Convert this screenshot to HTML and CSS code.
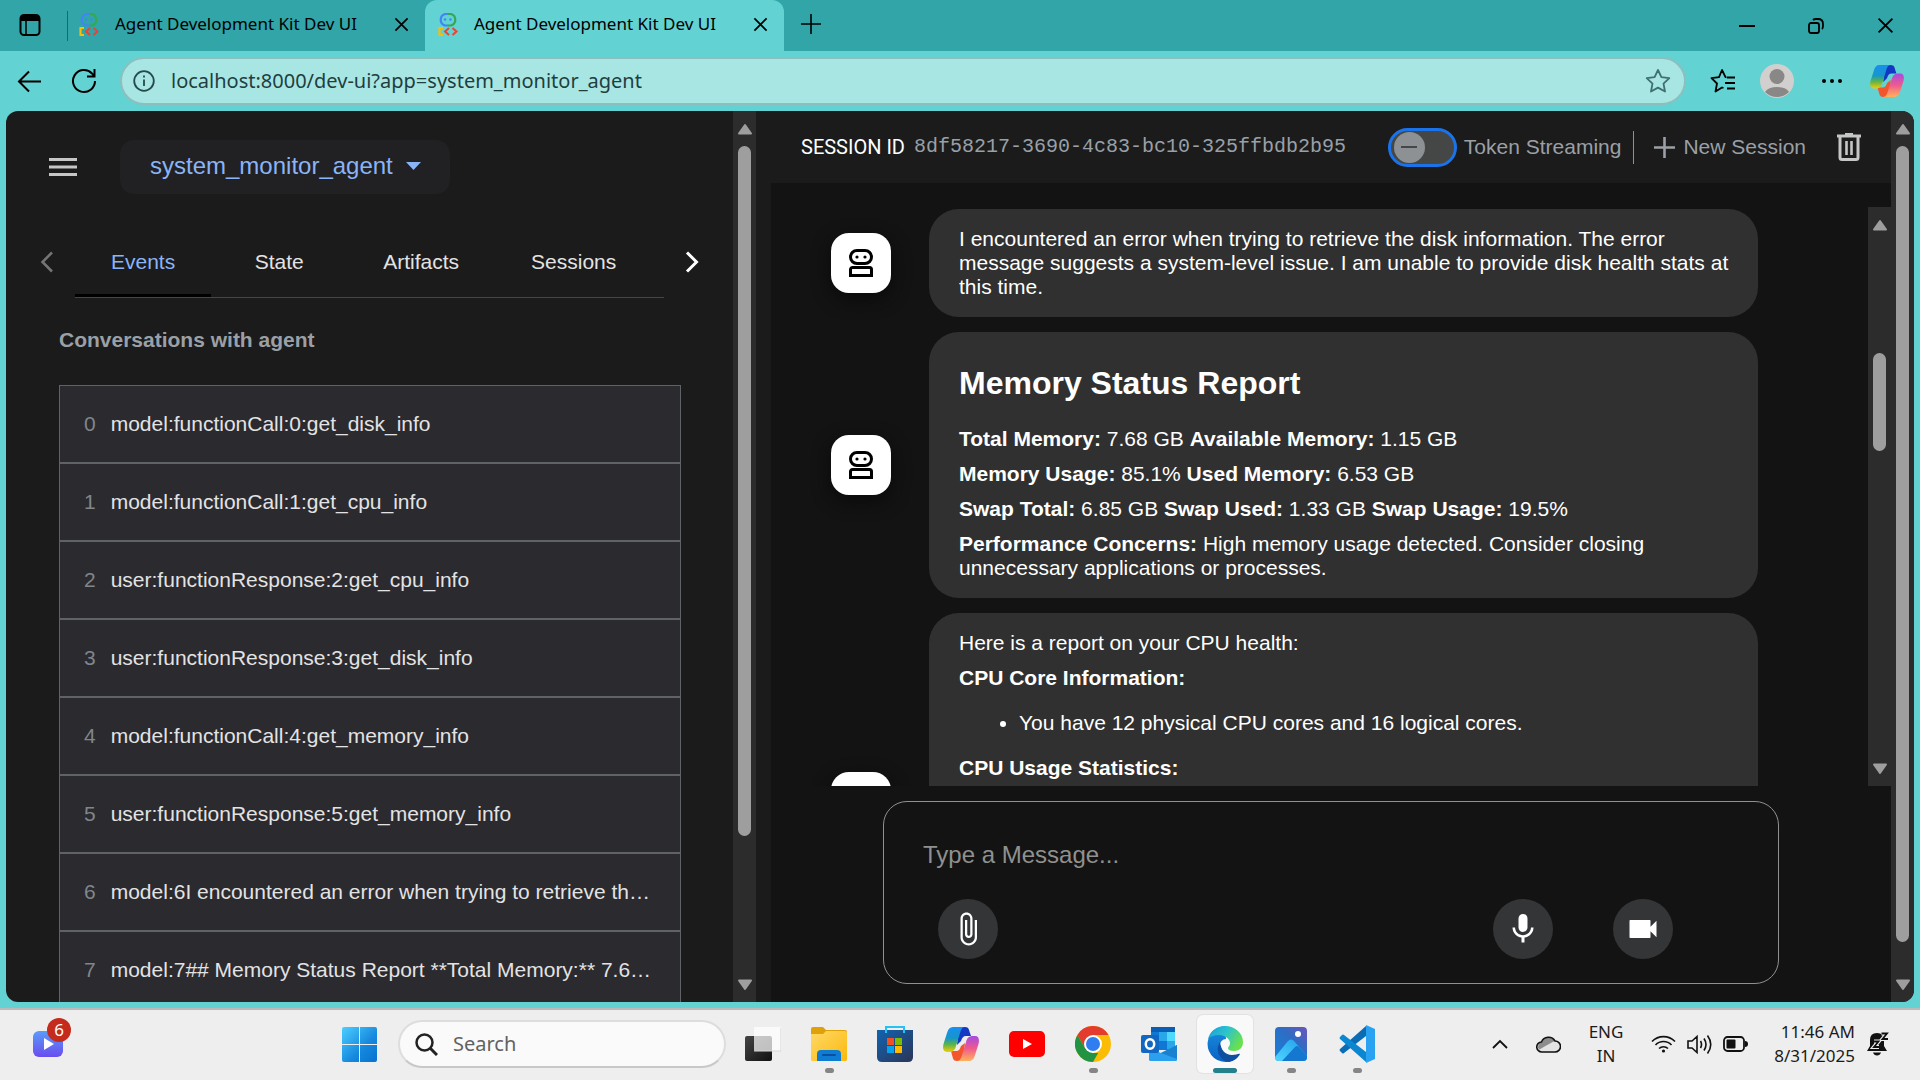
FILE: index.html
```html
<!DOCTYPE html>
<html lang="en">
<head>
<meta charset="utf-8">
<title>Agent Development Kit Dev UI</title>
<link rel="stylesheet" href="styles.css">
</head>
<body>
<svg class="defs" aria-hidden="true">
  <defs>
    <linearGradient id="cpA" x1="0" y1="0" x2="0" y2="1"><stop offset="0" stop-color="#1a8df0"/><stop offset=".45" stop-color="#1597c8"/><stop offset=".7" stop-color="#5db34a"/><stop offset="1" stop-color="#f5cc00"/></linearGradient>
    <linearGradient id="cpB" x1="0" y1="0" x2="0" y2="1"><stop offset="0" stop-color="#a64be0"/><stop offset=".5" stop-color="#ef5a8f"/><stop offset="1" stop-color="#ffb25a"/></linearGradient>
    <linearGradient id="win" gradientUnits="userSpaceOnUse" x1="0" y1="0" x2="35" y2="35"><stop offset="0" stop-color="#4ccfff"/><stop offset=".6" stop-color="#1688de"/><stop offset="1" stop-color="#0572cf"/></linearGradient>
    <linearGradient id="fold" x1="0" y1="0" x2="1" y2="1"><stop offset="0" stop-color="#ffd968"/><stop offset="1" stop-color="#fcb90c"/></linearGradient>
    <linearGradient id="store" x1="0" y1="0" x2="1" y2="1"><stop offset="0" stop-color="#1263b0"/><stop offset="1" stop-color="#2b3556"/></linearGradient>
    <linearGradient id="edgeTop" x1="0" y1="0" x2="1" y2=".5"><stop offset="0" stop-color="#1b9bd8"/><stop offset=".5" stop-color="#2bc2cf"/><stop offset="1" stop-color="#69e04e"/></linearGradient>
    <linearGradient id="edgeSide" x1="0" y1="0" x2="0" y2="1"><stop offset="0" stop-color="#1c8fe0"/><stop offset="1" stop-color="#0a62c4"/></linearGradient>
    <linearGradient id="photo" x1="0" y1="1" x2="1" y2="0"><stop offset="0" stop-color="#1580d8"/><stop offset=".6" stop-color="#2f6cc4"/><stop offset="1" stop-color="#6b55b8"/></linearGradient>
    <linearGradient id="hill" x1="0" y1="1" x2="1" y2="0"><stop offset="0" stop-color="#4fd4ff"/><stop offset="1" stop-color="#1f9fea"/></linearGradient>
    <linearGradient id="clip" x1="0" y1="0" x2="0" y2="1"><stop offset="0" stop-color="#5a9cf8"/><stop offset="1" stop-color="#6a4cf0"/></linearGradient>
    <linearGradient id="dark" x1="0" y1="0" x2="1" y2="1"><stop offset="0" stop-color="#444"/><stop offset="1" stop-color="#111"/></linearGradient>
    <symbol id="adk" viewBox="0 0 22 24">
      <path d="M11 2H8a6 6 0 0 0 0 11.500h3" fill="none" stroke="#4285f4" stroke-width="2.200"/>
      <path d="M11 2h3a6 6 0 0 1 0 11.500h-3" fill="none" stroke="#34a853" stroke-width="2.200"/>
      <circle cx="8" cy="7.500" r="1.200" fill="#4285f4"/><circle cx="13.500" cy="7.500" r="1.200" fill="#4285f4"/>
      <path d="M6 16H2.500v7H6" fill="none" stroke="#fbbc04" stroke-width="2.200"/>
      <path d="M12 16l-4 3.500 4 3.500M15.500 16l4 3.500-4 3.500" fill="none" stroke="#ea4335" stroke-width="2"/>
    </symbol>
    <symbol id="x" viewBox="0 0 16 16"><path d="M1.500 1.500l13 13M14.500 1.500l-13 13" stroke="currentColor" stroke-width="1.800" fill="none"/></symbol>
    <symbol id="copilot" viewBox="0 0 36 34">
      <path d="M16 0h6c4 0 4 3 5 6l1 3h-5c-3 0-4 2-5 5l-4 4z" fill="#1338c4"/>
      <path d="M20 34h-6c-4 0-4-3-5-6l-1-4h5c3 0 4-2 5-5l4-3z" fill="#f4562c"/>
      <path d="M10 0h12c-3 0-4 3-5 6l-4 13c-1 4-3 6-7 6H4c-4 0-4.500-4-3.500-8L4 6c1-4 3-6 6-6z" fill="url(#cpA)"/>
      <path d="M26 34H14c3 0 4-3 5-6l4-13c1-4 3-6 7-6h2c4 0 4.500 4 3.500 8L32 28c-1 4-3 6-6 6z" fill="url(#cpB)"/>
    </symbol>
    <symbol id="bot" viewBox="0 0 24 28">
      <rect x="1.500" y="1.500" width="21" height="13" rx="6.500" fill="none" stroke="#000" stroke-width="3"/>
      <circle cx="8" cy="8" r="1.600"/><circle cx="16" cy="8" r="1.600"/>
      <path d="M1.500 26.500v-6a2 2 0 0 1 2-2h17a2 2 0 0 1 2 2v6z" fill="none" stroke="#000" stroke-width="3"/>
    </symbol>
    <symbol id="up" viewBox="0 0 16 12"><path d="M8 2l6 8.500H2z" fill="#9e9e9e" stroke="#9e9e9e" stroke-width="2" stroke-linejoin="round"/></symbol>
    <symbol id="down" viewBox="0 0 16 12"><path d="M8 10L2 1.500h12z" fill="#9e9e9e" stroke="#9e9e9e" stroke-width="2" stroke-linejoin="round"/></symbol>
  </defs>
</svg>

<header class="tabstrip">
  <button class="icon-btn workspaces" aria-label="Tab actions"><svg width="22" height="24" viewBox="0 0 22 24"><rect x="1.500" y="2" width="19" height="20" rx="3.500" fill="none" stroke="#000" stroke-width="2"/><path d="M2 4q0-2 3-2h12q3 0 3 2v4H2z"/><path d="M7 8v14" stroke="#000" stroke-width="1.500"/></svg></button>
  <div class="browser-tab">
    <svg width="22" height="24"><use href="#adk"/></svg>
    <span class="tab-title">Agent Development Kit Dev UI</span>
    <button class="icon-btn" aria-label="Close tab"><svg width="15" height="15"><use href="#x"/></svg></button>
  </div>
  <div class="browser-tab active">
    <svg width="22" height="24"><use href="#adk"/></svg>
    <span class="tab-title">Agent Development Kit Dev UI</span>
    <button class="icon-btn" aria-label="Close tab"><svg width="15" height="15"><use href="#x"/></svg></button>
  </div>
  <button class="icon-btn new-tab" aria-label="New tab"><svg width="22" height="22" viewBox="0 0 22 22"><path d="M11 1v20M1 11h20" stroke="#000" stroke-width="1.600"/></svg></button>
  <div class="window-controls">
    <button class="icon-btn" aria-label="Minimize"><svg width="16" height="16" viewBox="0 0 16 16"><path d="M0 8h16" stroke="#000" stroke-width="2"/></svg></button>
    <button class="icon-btn" aria-label="Restore"><svg width="16" height="16" viewBox="0 0 16 16" fill="none" stroke="#000" stroke-width="1.800"><rect x="1" y="5" width="10" height="10" rx="2"/><path d="M5 2q1-1 3-1h2q5 0 5 5v2q0 2-1 3"/></svg></button>
    <button class="icon-btn" aria-label="Close window"><svg width="17" height="17"><use href="#x"/></svg></button>
  </div>
</header>

<nav class="toolbar">
  <button class="icon-btn" aria-label="Back"><svg width="25" height="23" viewBox="0 0 25 23" fill="none" stroke="#000" stroke-width="2"><path d="M24 11.500H2M12 1.500l-10 10 10 10"/></svg></button>
  <button class="icon-btn reload" aria-label="Reload"><svg width="26" height="26" viewBox="0 0 26 26" fill="none" stroke="#000" stroke-width="2"><path d="M24 13a11 11 0 1 1-3-7.500L23 8M23.500 1v7.500H16"/></svg></button>
  <div class="address">
    <svg width="22" height="22" viewBox="0 0 22 22" fill="none" stroke="#244a4b" stroke-width="1.800"><circle cx="11" cy="11" r="9.800"/><path d="M11 9.500V16M11 5.500v2"/></svg>
    <input type="text" aria-label="Address" value="localhost:8000/dev-ui?app=system_monitor_agent">
    <button class="icon-btn" aria-label="Add to favorites"><svg width="26" height="26" viewBox="0 0 26 26" fill="none" stroke="#3f6f70" stroke-width="1.800" stroke-linejoin="round"><path d="M13 2l3.400 7.200 7.900 1-5.800 5.400 1.500 7.900-7-3.900-7 3.900 1.500-7.900-5.800-5.400 7.900-1z"/></svg></button>
  </div>
  <div class="toolbar-end">
    <button class="icon-btn" aria-label="Favorites"><svg width="26" height="26" viewBox="0 0 26 26" fill="none" stroke="#000" stroke-width="1.800" stroke-linejoin="round"><path d="M16.500 9.500l-1-.3L12 2 9 9.200l-7.500 1 5.500 5.300L5.500 23.500l6.500-4 1.500.5M17 9.500h8M15 15h10M17 20.500h8"/></svg></button>
    <button class="icon-btn" aria-label="Profile"><svg width="34" height="34" viewBox="0 0 34 34"><circle cx="17" cy="17" r="17" fill="#d2d0ce"/><circle cx="17" cy="12.500" r="7.500" fill="#8a8886"/><path d="M5 28a13 8 0 0 1 24 0 17 17 0 0 1-24 0z" fill="#8a8886"/></svg></button>
    <button class="icon-btn" aria-label="Settings and more"><svg width="20" height="4" viewBox="0 0 20 4"><circle cx="2" cy="2" r="2"/><circle cx="10" cy="2" r="2"/><circle cx="18" cy="2" r="2"/></svg></button>
    <button class="icon-btn" aria-label="Copilot"><svg width="34" height="32"><use href="#copilot"/></svg></button>
  </div>
</nav>

<div class="viewport">
  <aside class="sidebar">
    <div class="side-content">
      <div class="side-head">
        <button class="icon-btn" aria-label="Menu"><svg width="28" height="20" viewBox="0 0 28 20"><path d="M0 2.500h28M0 10h28M0 17.500h28" stroke="#c4c7c5" stroke-width="3"/></svg></button>
        <div class="app-picker">
          <select aria-label="Agent"><option>system_monitor_agent</option></select>
          <svg width="15" height="8" viewBox="0 0 15 8"><path d="M0 0h15L7.500 8z" fill="#8ab4f8"/></svg>
        </div>
      </div>
      <div class="side-tabs">
        <button class="icon-btn" aria-label="Previous tabs"><svg width="14" height="22" viewBox="0 0 14 22"><path d="M12 1.500L2.500 11l9.500 9.500" fill="none" stroke="#757575" stroke-width="2.500"/></svg></button>
        <div class="tab-row" role="tablist">
          <button class="side-tab selected" role="tab">Events</button>
          <button class="side-tab" role="tab">State</button>
          <button class="side-tab" role="tab">Artifacts</button>
          <button class="side-tab" role="tab">Sessions</button>
        </div>
        <button class="icon-btn" aria-label="Next tabs"><svg width="14" height="22" viewBox="0 0 14 22"><path d="M2 1.500l9.500 9.500L2 20.500" fill="none" stroke="#fff" stroke-width="3"/></svg></button>
      </div>
      <h2 class="side-title">Conversations with agent</h2>
      <ol class="events">
        <li><button><span class="num">0</span><span class="name">model:functionCall:0:get_disk_info</span></button></li>
        <li><button><span class="num">1</span><span class="name">model:functionCall:1:get_cpu_info</span></button></li>
        <li><button><span class="num">2</span><span class="name">user:functionResponse:2:get_cpu_info</span></button></li>
        <li><button><span class="num">3</span><span class="name">user:functionResponse:3:get_disk_info</span></button></li>
        <li><button><span class="num">4</span><span class="name">model:functionCall:4:get_memory_info</span></button></li>
        <li><button><span class="num">5</span><span class="name">user:functionResponse:5:get_memory_info</span></button></li>
        <li><button><span class="num">6</span><span class="name">model:6I encountered an error when trying to retrieve th…</span></button></li>
        <li><button><span class="num">7</span><span class="name">model:7## Memory Status Report **Total Memory:** 7.6…</span></button></li>
      </ol>
    </div>
    <div class="scrollbar side-bar"><svg width="16" height="12"><use href="#up"/></svg><div class="track"><div class="thumb"></div></div><svg width="16" height="12"><use href="#down"/></svg></div>
  </aside>

  <main class="main">
    <header class="session">
      <span class="session-label">SESSION ID</span>
      <span class="session-id">8df58217-3690-4c83-bc10-325ffbdb2b95</span>
      <div class="session-actions">
        <input type="checkbox" id="streaming" class="toggle"><label for="streaming">Token Streaming</label>
        <button class="new-session"><svg width="21" height="21" viewBox="0 0 21 21"><path d="M10.500 0v21M0 10.500h21" stroke="currentColor" stroke-width="2.600"/></svg>New Session</button>
        <button class="icon-btn" aria-label="Delete session"><svg width="24" height="28" viewBox="0 0 24 28" fill="none" stroke="#c4c7c5"><path d="M0 3h24" stroke-width="3"/><path d="M8 1h8" stroke-width="2"/><path d="M3 4v20.500a2 2 0 0 0 2 2h14a2 2 0 0 0 2-2V4" stroke-width="3"/><path d="M9.500 8v14M14.500 8v14" stroke-width="2.600"/></svg></button>
      </div>
    </header>
    <section class="chat">
      <div class="scroller">
        <div class="messages">
          <article class="message"><div class="avatar"><svg width="24" height="28"><use href="#bot"/></svg></div>
            <div class="bubble"><p>I encountered an error when trying to retrieve the disk information. The error message suggests a system-level issue. I am unable to provide disk health stats at this time.</p></div>
          </article>
          <article class="message"><div class="avatar"><svg width="24" height="28"><use href="#bot"/></svg></div>
            <div class="bubble">
              <h2>Memory Status Report</h2>
              <p><strong>Total Memory:</strong> 7.68 GB <strong>Available Memory:</strong> 1.15 GB</p>
              <p><strong>Memory Usage:</strong> 85.1% <strong>Used Memory:</strong> 6.53 GB</p>
              <p><strong>Swap Total:</strong> 6.85 GB <strong>Swap Used:</strong> 1.33 GB <strong>Swap Usage:</strong> 19.5%</p>
              <p><strong>Performance Concerns:</strong> High memory usage detected. Consider closing unnecessary applications or processes.</p>
            </div>
          </article>
          <article class="message"><div class="avatar"><svg width="24" height="28"><use href="#bot"/></svg></div>
            <div class="bubble long">
              <p>Here is a report on your CPU health:</p>
              <p><strong>CPU Core Information:</strong></p>
              <ul><li>You have 12 physical CPU cores and 16 logical cores.</li></ul>
              <p><strong>CPU Usage Statistics:</strong></p>
            </div>
          </article>
        </div>
        <div class="scrollbar chat-bar"><svg width="16" height="12"><use href="#up"/></svg><div class="track"><div class="thumb"></div></div><svg width="16" height="12"><use href="#down"/></svg></div>
      </div>
      <form class="composer">
        <input type="text" aria-label="Message" placeholder="Type a Message...">
        <div class="composer-actions">
          <button type="button" class="round" aria-label="Attach file"><svg width="36" height="36" viewBox="0 0 24 24" fill="#fff"><path d="M16.500 6v11.500c0 2.210-1.790 4-4 4s-4-1.790-4-4V5c0-1.380 1.120-2.500 2.500-2.500s2.500 1.120 2.500 2.500v10.500c0 .55-.45 1-1 1s-1-.45-1-1V6H10v9.500c0 1.380 1.120 2.500 2.500 2.500s2.500-1.120 2.500-2.500V5c0-2.210-1.790-4-4-4S7 2.790 7 5v12.500c0 3.040 2.460 5.500 5.500 5.500s5.500-2.460 5.500-5.500V6h-1.500z"/></svg></button>
          <button type="button" class="round mic" aria-label="Use microphone"><svg width="36" height="36" viewBox="0 0 24 24" fill="#fff"><path d="M12 14c1.660 0 2.990-1.340 2.990-3L15 5c0-1.660-1.340-3-3-3S9 3.340 9 5v6c0 1.660 1.340 3 3 3zm5.300-3c0 3-2.540 5.100-5.300 5.100S6.700 14 6.700 11H5c0 3.410 2.720 6.230 6 6.720V21h2v-3.280c3.280-.48 6-3.300 6-6.720h-1.700z"/></svg></button>
          <button type="button" class="round" aria-label="Use camera"><svg width="36" height="36" viewBox="0 0 24 24" fill="#fff"><path d="M17 10.500V6.500Q17 6 16.500 6h-13Q3 6 3 6.500v11q0 .5.5.5h13q.5 0 .5-.5v-4l4 4v-11l-4 4z"/></svg></button>
        </div>
      </form>
    </section>
  </main>
  <div class="scrollbar page-bar"><svg width="16" height="12"><use href="#up"/></svg><div class="track"><div class="thumb"></div></div><svg width="16" height="12"><use href="#down"/></svg></div>
</div>

<footer class="taskbar">
  <div class="widgets"><button class="icon-btn widget" aria-label="Widgets"><svg width="30" height="26" viewBox="0 0 30 26"><rect width="30" height="26" rx="6" fill="url(#clip)"/><path d="M11 7l10 6-10 6z" fill="#fff"/></svg><span class="badge">6</span></button></div>
  <button class="icon-btn" aria-label="Start"><svg width="35" height="35" viewBox="0 0 35 35"><path d="M2 0h15v17H0V2q0-2 2-2zM18 0h15q2 0 2 2v15H18zM0 18h17v17H2q-2 0-2-2zM18 18h17v15q0 2-2 2H18z" fill="url(#win)"/></svg></button>
  <label class="search"><svg width="23" height="23" viewBox="0 0 23 23" fill="none" stroke="#222" stroke-width="2.500"><circle cx="9.500" cy="9.500" r="8"/><path d="M15 15l7 7" stroke-width="3"/></svg><input type="text" aria-label="Search" placeholder="Search"></label>
  <div class="apps">
    <button class="app" aria-label="Task view"><svg width="36" height="36" viewBox="0 0 36 36"><rect y="10" width="27" height="25" rx="2" fill="url(#dark)"/><rect x="9" y="1" width="27" height="24" rx="1" fill="#fff" opacity=".72"/><path d="M9 25h27V2" fill="none" stroke="#d5d5d5"/></svg></button>
    <button class="app running" aria-label="File Explorer"><svg width="36" height="36" viewBox="0 0 36 36"><path d="M0 3q0-2 2-2h10l3 3h19q2 0 2 2v4H0z" fill="#dfa008"/><path d="M0 8h12l3-3h19q2 0 2 2v27q0 1-2 1H2q-2 0-2-1z" fill="url(#fold)"/><path d="M6 35V28q0-4 4-4h16q4 0 4 4v7z" fill="#0f7cd4"/><rect x="11" y="28" width="14" height="2" rx="1" fill="#0a4fa0"/></svg></button>
    <button class="app" aria-label="Microsoft Store"><svg width="36" height="36" viewBox="0 0 36 36"><path d="M0 4h36v27q0 5-5 5H5q-5 0-5-5z" fill="url(#store)"/><path d="M9 7V1h18v6" fill="none" stroke="#28c1f4" stroke-width="2"/><path d="M10 12h7v7h-7z" fill="#f25022"/><path d="M18 12h7v7h-7z" fill="#7fba00"/><path d="M10 20h7v7h-7z" fill="#00a4ef"/><path d="M18 20h7v7h-7z" fill="#ffb900"/></svg></button>
    <button class="app" aria-label="Copilot"><svg width="36" height="34"><use href="#copilot"/></svg></button>
    <button class="app" aria-label="YouTube"><svg width="36" height="26" viewBox="0 0 36 26"><rect width="36" height="26" rx="5" fill="#f00"/><path d="M14 8l9 5-9 5z" fill="#fff"/></svg></button>
    <button class="app running" aria-label="Chrome"><svg width="36" height="36" viewBox="0 0 36 36"><circle cx="18" cy="18" r="18" fill="#fbbc05"/><path d="M2.400 9A18 18 0 0 1 33.600 9H18v9l-7.800 4.500z" fill="#e33b2e"/><path d="M2.400 9l7.800 13.500L18 27h5.200L18 36A18 18 0 0 1 2.400 9z" fill="#229342"/><circle cx="18" cy="18" r="9" fill="#fff"/><circle cx="18" cy="18" r="7" fill="#2f7df0"/></svg></button>
    <button class="app" aria-label="Outlook"><svg width="36" height="36" viewBox="0 0 36 36"><path d="M10 2q0-1 1-1h22q1 0 1 1v22H10z" fill="#0f78d4"/><path d="M10 1h24v5H10z" fill="#0a5fb4"/><path d="M18 6h8v9h-8zM26 15h8v8h-8z" fill="#28a8ea"/><path d="M26 6h8v9h-8z" fill="#50d9ff"/><path d="M36 19v15q0 1-1 1H10q-2 0-2-1V22l12 5z" fill="#2aa0ee"/><path d="M20 27l16-8v14z" fill="#1a80d0"/><rect y="9" width="18" height="18" rx="2" fill="#1068c2"/><ellipse cx="9" cy="18" rx="4.200" ry="4.800" fill="none" stroke="#fff" stroke-width="2.500"/></svg></button>
    <button class="app running current" aria-label="Edge"><svg width="36" height="36" viewBox="0 0 36 36"><path d="M18 0a18 18 0 1 0 13 31c-8 3-17-1-18-9-1-5 2-9 6-9z" fill="url(#edgeSide)"/><path d="M1 13C3 5 10 0 18 0c10 0 18 7 18 16 0 6-4 9-9 9-4 0-6-1-6-3 0-1 2-2 2-5 0-4-5-8-11-8-5 0-9 2-11 4z" fill="url(#edgeTop)"/><path d="M13 16c-6 9 1 19 9 20 5-1 9-4 11-8-1-1-4 1-8 1-7 0-11-5-12-13z" fill="#0f4fa0"/></svg></button>
    <button class="app running" aria-label="Photos"><svg width="32" height="34" viewBox="0 0 32 34"><rect width="32" height="34" rx="4" fill="url(#photo)"/><path d="M0 30l13-16q3-3 6 0l13 15v1q0 4-4 4H4q-4 0-4-4z" fill="url(#hill)"/><path d="M7 34l13-14q2-2 4 0l8 9v1q0 4-4 4z" fill="#1478d0"/><circle cx="23" cy="7" r="3" fill="#fff"/></svg></button>
    <button class="app running" aria-label="Visual Studio Code"><svg width="36" height="38" viewBox="0 0 36 38"><path d="M27 1v10L5 28q-1 1-2 0l-2-2q-1-1 0-2z" fill="#0a6cb4"/><path d="M27 37V27L5 10q-1-1-2 0l-2 2q-1 1 0 2z" fill="#0b86d0"/><path d="M27 0l9 4v30l-9 4z" fill="#2aa2f2"/></svg></button>
  </div>
  <div class="tray">
    <button class="icon-btn" aria-label="Show hidden icons"><svg width="16" height="10" viewBox="0 0 16 10"><path d="M1 9l7-7 7 7" fill="none" stroke="#111" stroke-width="1.800"/></svg></button>
    <svg width="25" height="18" viewBox="0 0 25 18"><path d="M6 17a5 5 0 0 1-.5-10A7.500 7.500 0 0 1 19 6a5.500 5.500 0 0 1 0 11z" fill="#e4e4e4"/><path d="M2 13Q2 8 6 7.500a7 7 0 0 1 12.500-1.500l-10 5.500-5 3z" fill="#8d8d8d"/><path d="M6 17a5 5 0 0 1-.5-10A7.500 7.500 0 0 1 19 6a5.500 5.500 0 0 1 0 11z" fill="none" stroke="#111" stroke-width="1.600"/></svg>
    <span class="lang">ENG<br>IN</span>
    <div class="status">
      <svg width="25" height="18" viewBox="0 0 25 18" fill="none" stroke="#111" stroke-width="1.600"><path d="M1 6.500a16 16 0 0 1 23 0M4.500 10a11 11 0 0 1 16 0M8 13.500a6.500 6.500 0 0 1 9 0"/><circle cx="12.500" cy="16" r="1.600" fill="#111" stroke="none"/></svg>
      <svg width="25" height="21" viewBox="0 0 25 21" fill="none" stroke="#111" stroke-width="1.600"><path d="M1 7h4l5-4.500v16L5 14H1zM13.500 7q2 3.500 0 7M17 4.500q4 6 0 12M20.500 1.500q6.500 9 0 18"/></svg>
      <svg width="25" height="16" viewBox="0 0 25 16"><rect x="1" y="1" width="20" height="14" rx="3.500" fill="none" stroke="#111" stroke-width="1.800"/><rect x="3.500" y="3.500" width="9" height="9" rx="1" fill="#111"/><path d="M22 5q3 0 3 3t-3 3z" fill="#111"/></svg>
    </div>
    <time class="clock">11:46 AM<br>8/31/2025</time>
    <svg width="22" height="24" viewBox="0 0 22 24"><path d="M10 1Q3 1 3 8v6l-3 5h20l-3-5V8q0-7-7-7zM6 20.500h8q-1 3-4 3t-4-3z" fill="#111"/><path d="M14.500 1.500H20L15.500 7H21M7 9.500h4.500L7 15h5" fill="none" stroke="#eee" stroke-width="4"/><path d="M14.500 1.500H20L15.500 7H21" fill="none" stroke="#111" stroke-width="1.800"/><path d="M7 9.500h4.500L7 15h5" fill="none" stroke="#111" stroke-width="1.800"/></svg>
  </div>
</footer>
</body>
</html>
```
FILE: styles.css
```css
* { box-sizing: border-box; }
body {
  margin: 0;
  height: 100vh;
  display: flex;
  flex-direction: column;
  overflow: hidden;
  background: #62d2d2;
  color: #fff;
  font-family: "Liberation Sans", Arial, sans-serif;
  font-size: 21px;
  line-height: 24px;
}
h2, p, ul, ol { margin: 0; padding: 0; }
button, input, select { font: inherit; color: inherit; background: none; border: 0; padding: 0; margin: 0; }
svg { display: block; flex: none; }
.defs { position: absolute; width: 0; height: 0; }
.icon-btn { display: flex; align-items: center; justify-content: center; flex: none; }

/* Browser chrome */
.tabstrip, .toolbar, .taskbar { font-family: "Noto Sans", "Open Sans", sans-serif; color: #000; }
.tabstrip { display: flex; flex: none; height: 51px; background: #31a5a8; }
.workspaces { width: 68px; align-self: center; border-right: 1px solid #17696c; height: 30px; justify-content: flex-end; padding: 0 26px 2px 0; }
.browser-tab { display: flex; align-items: center; padding: 0 16px 3px 10px; width: 357px; font-size: 17px; }
.browser-tab.active { background: #62d2d2; border-radius: 12px 12px 0 0; width: 359px; padding-left: 12px; }
.tab-title { flex: 1; margin-left: 15px; white-space: nowrap; }
.new-tab { margin-left: 16px; padding-bottom: 4px; }
.window-controls { display: flex; margin-left: auto; padding-right: 26px; gap: 53px; }

.toolbar { display: flex; align-items: center; flex: none; height: 60px; padding: 0 16px 0 17px; }
.reload { margin-left: 29px; }
.address { display: flex; align-items: center; flex: 1; height: 48px; margin-left: 23px; padding: 0 13px 0 11px; background: #a8e6e4; border: 2px solid #8dbfbf; border-radius: 24px; }
.address input { flex: 1; margin-left: 16px; min-width: 0; font-size: 20px; color: #1f3e3f; outline: 0; }
.toolbar-end { display: flex; align-items: center; gap: 28px; margin-left: 24px; }
.toolbar-end .icon-btn:first-child { margin-right: -4px; }

/* Page */
.viewport { display: flex; flex: 1; min-height: 0; margin: 0 6px 6px; border-radius: 12px; overflow: hidden; background: #1b1b1b; }
.scrollbar { display: flex; flex-direction: column; align-items: center; justify-content: space-between; flex: none; width: 23px; padding: 12px 0 11px; background: #2c2c2c; }
.track { display: flex; flex-direction: column; flex: 1; width: 13px; margin: 11px 0 12px; }
.thumb { background: #9e9e9e; border-radius: 7px; }
.side-bar .thumb { height: 84%; }
.page-bar .thumb { height: 97%; }
.chat-bar .track::before { content: ""; flex: 111; }
.chat-bar .thumb { flex: 98; }
.chat-bar .track::after { content: ""; flex: 300; }

.sidebar { display: flex; flex: 0 1 750px; min-width: 0; }
.side-content { flex: 1; min-width: 0; overflow: hidden; }
.side-head { display: flex; align-items: center; gap: 43px; padding: 29px 43px 0; }
.app-picker { display: flex; align-items: center; height: 54px; width: 330px; padding: 0 0 2px 30px; background: #212123; border-radius: 14px; color: #8ab4f8; }
.app-picker select { appearance: none; font-size: 24px; line-height: 30px; width: 256px; outline: 0; }
.side-tabs { display: flex; align-items: center; gap: 21px; padding: 32px 34px 0; }
.tab-row { display: flex; flex: 1; min-width: 0; height: 72px; overflow: hidden; border-bottom: 1px solid #444746; }
.side-tab { min-width: 136px; padding: 0 36px; color: #e3e3e3; }
.side-tab.selected { color: #8ab4f8; border-top: 3px solid transparent; border-bottom: 3px solid #000; }
.side-title { padding: 30px 53px 33px; font-size: 21px; line-height: 24px; color: #9aa0a6; }
.events { margin: 0 52px 0 53px; list-style: none; border: 1px solid #5f6368; border-width: 0 1px; }
.events button { display: flex; align-items: center; gap: 15px; width: 100%; height: 78px; padding: 0 24px; background: #2b2a2f; border: 1px solid #5f6368; border-width: 1px 0; text-align: left; }
.num { color: #80868b; }
.name { color: #e3e3e3; white-space: nowrap; overflow: hidden; text-overflow: ellipsis; }

.main { display: flex; flex-direction: column; flex: 1; min-width: 0; }
.session { display: flex; align-items: center; flex: none; height: 72px; padding: 0 30px 0 45px; color: #9aa0a6; }
.session-label { font-family: Roboto, sans-serif; font-size: 20px; color: #fff; }
.session-id { margin-left: 9px; font-family: "Liberation Mono", monospace; font-size: 20px; }
.session-actions { display: flex; align-items: center; margin-left: auto; }
.toggle { appearance: none; width: 69px; height: 39px; margin-right: 7px; background: #444746; border: 3px solid #1a73e8; border-radius: 20px; padding: 1px 3px; }
.toggle::before { content: ""; display: block; width: 31px; height: 31px; border-radius: 50%; background: linear-gradient(#444746, #444746) center / 16px 2px no-repeat #8e9194; }
.new-session { display: flex; align-items: center; gap: 8px; height: 33px; margin: 0 31px 0 12px; padding-left: 20px; border-left: 1px solid #8e918f; }

.chat { display: flex; flex-direction: column; flex: 1; min-height: 0; margin-left: 15px; padding: 24px 0 18px; background: #131313; }
.scroller { display: flex; flex: 1; min-height: 0; overflow: hidden; }
.messages { display: flex; flex-direction: column; gap: 15px; flex: 1; min-width: 0; padding: 2px 110px 0 60px; }
.message { display: flex; align-items: center; flex: none; gap: 38px; }
.avatar { display: flex; align-items: center; justify-content: center; flex: none; width: 60px; height: 60px; border-radius: 18px; background: #fff; box-shadow: 0 6px 18px #0a0a0a; }
.bubble { display: flex; flex-direction: column; gap: 11px; flex: 1; min-width: 0; padding: 18px 28px 18px 30px; border-radius: 30px; background: #303030; }
.bubble h2 { padding: 15px 0; font-size: 32px; line-height: 36px; }
.bubble ul { padding: 10px 0 10px 60px; }
.long { min-height: 378px; }

.composer { flex: none; margin: 15px 10% 0; padding: 35px 38px 24px 39px; border: 1px solid #8e918f; border-radius: 24px; }
.composer input { display: block; width: 100%; height: 36px; font-size: 24px; outline: 0; }
.composer input::placeholder { color: #8e918f; opacity: 1; }
.composer-actions { display: flex; gap: 60px; margin-top: 26px; padding: 0 67px 0 15px; }
.round { display: flex; align-items: center; justify-content: center; width: 60px; height: 60px; border-radius: 50%; background: #333537; }
.mic { margin-left: auto; }

/* Taskbar */
.taskbar { display: flex; align-items: center; flex: none; height: 72px; padding: 0 31px 2px 0; background: #eee; border-top: 2px solid #bbb; color: #1b1b1b; font-size: 17px; }
.widgets { width: 342px; padding-left: 33px; }
.widget { position: relative; }
.badge { position: absolute; left: 14px; top: -13px; width: 24px; height: 24px; border-radius: 50%; background: #c42b1c; color: #fff; font-size: 17px; line-height: 24px; text-align: center; }
.search { display: flex; align-items: center; gap: 15px; width: 328px; height: 48px; margin-left: 21px; padding: 0 15px; background: #fafafa; border: 2px solid #ddd; border-bottom-color: #c8c8c8; border-radius: 24px; }
.search input { width: 240px; font-size: 20px; outline: 0; }
.search input::placeholder { color: #616161; opacity: 1; }
.apps { display: flex; margin-left: 4px; }
.app { display: flex; align-items: center; justify-content: center; position: relative; width: 56px; height: 58px; margin: 0 5px; border-radius: 6px; }
.current { background: #f9f9f9; box-shadow: 0 0 0 1px #e2e2e2; }
.running::after { content: ""; position: absolute; bottom: 0; width: 9px; height: 5px; border-radius: 3px; background: #858585; }
.current::after { width: 24px; background: #25808e; }
.tray { display: flex; align-items: center; margin-left: auto; line-height: 24px; }
.lang { width: 90px; text-align: center; }
.tray > .icon-btn { margin-right: 28px; }
.status { display: flex; align-items: center; gap: 11px; }
.clock { width: 107px; margin-right: 12px; text-align: right; white-space: nowrap; }
```
